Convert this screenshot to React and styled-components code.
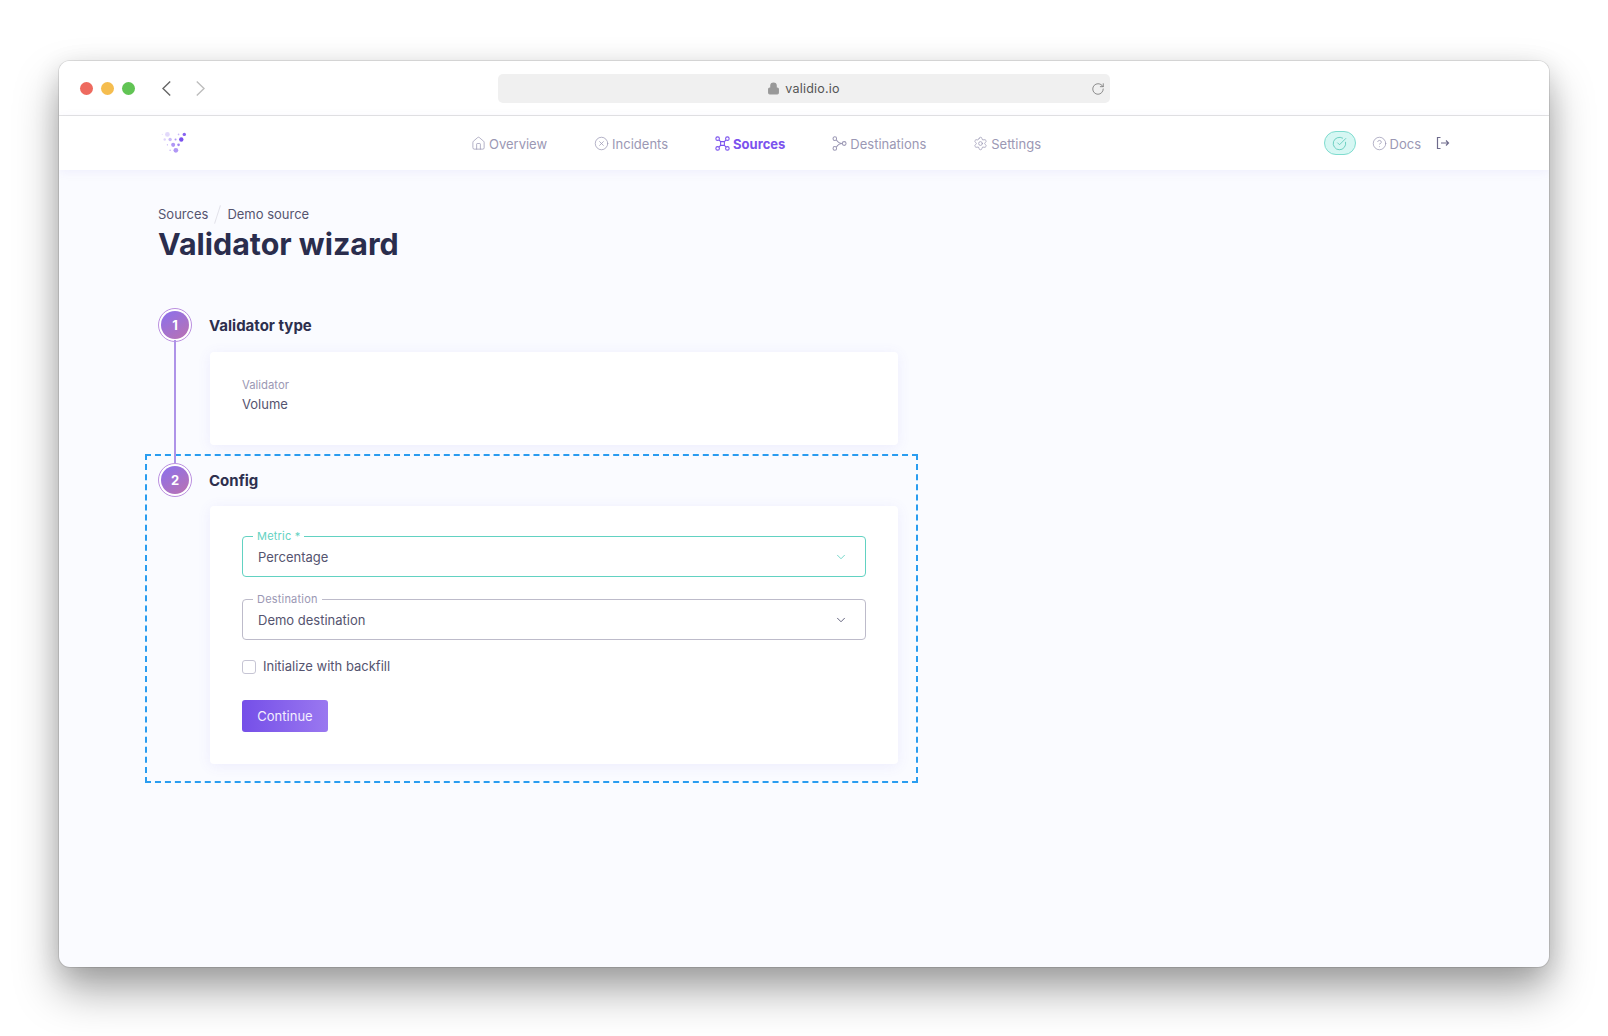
import React from "react";
import styled, { createGlobalStyle } from "styled-components";
import { House, CircleX, Settings, CircleHelp, CircleCheckBig, ChevronDown, Lock, RotateCw } from "lucide-react";

const GlobalStyle = createGlobalStyle`
  html, body { margin: 0; background: #fff; }
  * { box-sizing: border-box; }
  body { font-family: "Inter", "Liberation Sans", sans-serif; color: #4a4a68; }
`;

const Page = styled.div`
  width: 1608px;
  height: 1036px;
  padding: 61px 59px 69px;
  overflow: hidden;
`;
const Window = styled.div`
  height: 906px;
  border-radius: 11px;
  overflow: hidden;
  background: #fafbff;
  box-shadow: 0 0 0 1px rgba(0, 0, 0, 0.1), 0 24px 44px rgba(0, 0, 0, 0.34), 0 6px 26px rgba(0, 0, 0, 0.12);
`;
const TitleBar = styled.div`
  height: 55px;
  background: #fff;
  border-bottom: 1px solid #e3e3e3;
  display: flex;
  align-items: center;
  padding: 0 21px;
`;
const Light = styled.span`
  width: 13px;
  height: 13px;
  border-radius: 50%;
  margin-right: 8px;
  background: ${(p) => p.$color};
`;
const Arrows = styled.div`
  display: flex;
  align-items: center;
  gap: 25px;
  margin-left: 18.5px;
  width: 336.5px;
`;
const UrlBar = styled.div`
  position: relative;
  width: 612px;
  height: 29px;
  border-radius: 5px;
  background: #f0f0f0;
  display: flex;
  align-items: center;
  justify-content: center;
  gap: 5px;
  padding: 1px 1px 0 0;
  font-size: 12.5px;
  letter-spacing: 0.2px;
  color: #555;
`;
const Reload = styled.span`
  position: absolute;
  right: 5px;
  top: 8px;
  display: flex;
  color: #777;
`;
const NavBar = styled.nav`
  height: 54px;
  background: #fff;
  display: flex;
  align-items: center;
  padding: 1px 99px 0 101px;
  box-shadow: 0 2px 10px rgba(108, 90, 230, 0.08);
  position: relative;
`;
const Logo = styled.svg`
  width: 27px;
  height: 22px;
  margin: -4px 284px 0 0;
  flex: none;
`;
const Menu = styled.div`
  display: flex;
  align-items: center;
  gap: 47px;
`;
const MenuItem = styled.a`
  display: flex;
  align-items: center;
  gap: 3px;
  font-size: 13px;
  font-weight: ${(p) => (p.$active ? 700 : 400)};
  color: ${(p) => (p.$active ? "#7b52ee" : "#9b98b4")};
`;
const RightSide = styled.div`
  margin-left: auto;
  display: flex;
  align-items: center;
`;
const StatusPill = styled.span`
  width: 32px;
  height: 24px;
  border-radius: 12px;
  background: #d6f7f3;
  border: 1px solid #7fdccf;
  color: #56c6b6;
  display: flex;
  align-items: center;
  justify-content: center;
  margin-right: 16px;
  margin-top: -1px;
`;
const LogoutIcon = styled.svg`
  width: 14px;
  height: 14px;
  margin: -1px 0 0 15px;
  color: #6e6b8c;
`;
const Content = styled.main`
  padding: 36px 0 0 99px;
`;
const Crumbs = styled.div`
  display: flex;
  align-items: center;
  height: 17px;
  font-size: 13px;
  line-height: 17px;
  color: #55546f;
`;
const CrumbSep = styled.span`
  width: 1px;
  height: 19px;
  background: #e2e2ea;
  transform: rotate(18deg);
  margin: 0 9px;
`;
const Title = styled.h1`
  margin: 1px 0 0;
  font-size: 30.4px;
  line-height: 40px;
  font-weight: 700;
  color: #2a2d4d;
`;
const Steps = styled.div`
  width: 740px;
  margin-top: 44px;
`;
const Step = styled.section`
  display: grid;
  grid-template-columns: 34px 1fr;
  column-gap: 17px;
  row-gap: 10px;
  ${(p) =>
    p.$selected &&
    `
    margin: 9px -20px 0 -13px;
    padding: 7px 18px 17px 11px;
    border: 2px dashed #2a9df0;
    row-gap: 9px;
  `}
`;
const Badge = styled.div`
  position: relative;
  width: 34px;
  height: 34px;
  padding: 2px;
  border-radius: 50%;
  border: 1.5px solid #bb90e0;
  background: linear-gradient(145deg, #8a70ee, #bb72b0) content-box, #fff padding-box;
  display: flex;
  align-items: center;
  justify-content: center;
  color: #fff;
  font-size: 13px;
  font-weight: 700;
  ${(p) =>
    p.$line &&
    `
    &::after {
      content: "";
      position: absolute;
      left: 14.5px;
      top: 31px;
      width: 2px;
      height: 123px;
      background: #ae93e8;
    }
  `}
`;
const StepTitle = styled.h2`
  margin: 0;
  align-self: center;
  font-size: 15px;
  font-weight: 700;
  color: #2d2f4e;
`;
const Card = styled.div`
  grid-column: 2;
  margin-left: 1px;
  background: #fff;
  border-radius: 4px;
  box-shadow: 0 2px 14px rgba(104, 90, 230, 0.09);
  padding: ${(p) => p.$pad};
`;
const SmallLabel = styled.div`
  font-size: 11.3px;
  line-height: 16px;
  color: #9b98b4;
`;
const Value = styled.div`
  font-size: 13px;
  line-height: 20px;
  margin-top: 1px;
  color: #55546f;
`;
const Field = styled.fieldset`
  margin: 0 0 16px;
  padding: 0 17px 4px 15px;
  height: 47px;
  border: 1px solid ${(p) => p.$color};
  border-radius: 4px;
  display: flex;
  align-items: center;
  justify-content: space-between;
  color: ${(p) => p.$chevron};
`;
const Legend = styled.legend`
  margin-left: -5px;
  padding: 0 4px;
  font-size: 11px;
  line-height: 12px;
  letter-spacing: 0.2px;
  color: ${(p) => p.$color};
`;
const FieldText = styled.span`
  font-size: 13px;
  color: #55546f;
`;
const CheckRow = styled.label`
  display: flex;
  align-items: center;
  gap: 7px;
  font-size: 13px;
  line-height: 17px;
  color: #55546f;
  margin-top: 18px;
`;
const CheckBox = styled.span`
  width: 14px;
  height: 14px;
  border: 1px solid #c6c5d4;
  border-radius: 3px;
  background: #fff;
`;
const Button = styled.button`
  display: block;
  width: 86px;
  height: 32px;
  margin-top: 25px;
  border: 0;
  border-radius: 3px;
  font: inherit;
  font-size: 13px;
  color: #f3effe;
  background: linear-gradient(90deg, #754fe8, #9a78f0);
`;

const dots = [
  [52, 30, 7, 0.22], [37, 30, 2, 0.15], [85, 30, 2.5, 0.4], [102, 30, 5, 0.9],
  [44, 45, 3.5, 0.25], [60, 45, 5, 0.4], [76, 45, 3, 0.6], [93, 45, 6.5, 1],
  [52, 61, 2, 0.5], [69, 61, 6, 0.6], [85, 61, 4, 0.7], [60, 77, 2, 0.5], [77, 77, 7, 0.6],
];

const Arrow = ({ d, color }) => (
  <svg width="9" height="15" viewBox="0 0 9 15" fill="none" stroke={color} strokeWidth="1.4">
    <path d={d} />
  </svg>
);

const SourcesIcon = () => (
  <svg width="15" height="15" viewBox="0 0 16 16" fill="none" stroke="currentColor" strokeWidth="1.15">
    <circle cx="2.8" cy="2.8" r="1.9" />
    <circle cx="13.2" cy="2.8" r="1.9" />
    <circle cx="2.8" cy="13.2" r="1.9" />
    <circle cx="13.2" cy="13.2" r="1.9" />
    <path d="M4.2 4.2 L6 6 H10 L11.8 4.2 M10 6 V10 L11.8 11.8 M10 10 H6 L4.2 11.8 M6 10 V6" />
  </svg>
);

const DestinationsIcon = () => (
  <svg width="15" height="15" viewBox="0 0 16 16" fill="none" stroke="currentColor" strokeWidth="1.1">
    <circle cx="3" cy="2.8" r="1.9" />
    <circle cx="3" cy="13.2" r="1.9" />
    <circle cx="13" cy="8" r="2" />
    <path d="M4.6 4 Q7 8 11 8 M4.6 12 Q7 8 11 8" />
  </svg>
);

const App = () => {
  return (
    <Page>
      <GlobalStyle />
      <Window>
        <TitleBar>
          <Light $color="#ee6a5f" />
          <Light $color="#f5bd4f" />
          <Light $color="#61c454" />
          <Arrows>
            <Arrow d="M8.2 0.6 L1 7.5 L8.2 14.4" color="#666" />
            <Arrow d="M0.8 0.6 L8 7.5 L0.8 14.4" color="#bdbdbd" />
          </Arrows>
          <UrlBar>
            <Lock size={13} color="#999" fill="#999" />
            validio.io
            <Reload>
              <RotateCw size={14} strokeWidth={1.4} />
            </Reload>
          </UrlBar>
        </TitleBar>
        <NavBar>
          <Logo viewBox="30 20 80 65">
            {dots.map(([cx, cy, r, o], i) => (
              <circle key={i} cx={cx} cy={cy} r={r} fill="#7b52ee" opacity={o} />
            ))}
          </Logo>
          <Menu>
            <MenuItem>
              <House size={15} strokeWidth={1.2} />
              Overview
            </MenuItem>
            <MenuItem>
              <CircleX size={15} strokeWidth={1.2} />
              Incidents
            </MenuItem>
            <MenuItem $active>
              <SourcesIcon />
              Sources
            </MenuItem>
            <MenuItem>
              <DestinationsIcon />
              Destinations
            </MenuItem>
            <MenuItem>
              <Settings size={15} strokeWidth={1.2} />
              Settings
            </MenuItem>
          </Menu>
          <RightSide>
            <StatusPill>
              <CircleCheckBig size={15} strokeWidth={1.3} />
            </StatusPill>
            <MenuItem>
              <CircleHelp size={15} strokeWidth={1.2} />
              Docs
            </MenuItem>
            <LogoutIcon viewBox="0 0 14 14" fill="none" stroke="currentColor" strokeWidth="1.2">
              <path d="M4.5 1.5 H1.5 V12.5 H4.5 M5 7 H12.5 M10 4.5 L12.5 7 L10 9.5" />
            </LogoutIcon>
          </RightSide>
        </NavBar>
        <Content>
          <Crumbs>
            Sources
            <CrumbSep />
            Demo source
          </Crumbs>
          <Title>Validator wizard</Title>
          <Steps>
            <Step>
              <Badge $line>1</Badge>
              <StepTitle>Validator type</StepTitle>
              <Card $pad="25px 32px 31px">
                <SmallLabel>Validator</SmallLabel>
                <Value>Volume</Value>
              </Card>
            </Step>
            <Step $selected>
              <Badge>2</Badge>
              <StepTitle>Config</StepTitle>
              <Card $pad="24px 32px 32px">
                <Field $color="#62d2c2" $chevron="#62d2c2">
                  <Legend $color="#62d2c2">Metric *</Legend>
                  <FieldText>Percentage</FieldText>
                  <ChevronDown size={14} strokeWidth={1.5} />
                </Field>
                <Field $color="#bdbbca" $chevron="#4f4f6d">
                  <Legend $color="#9b98b4">Destination</Legend>
                  <FieldText>Demo destination</FieldText>
                  <ChevronDown size={14} strokeWidth={1.5} />
                </Field>
                <CheckRow>
                  <CheckBox />
                  Initialize with backfill
                </CheckRow>
                <Button>Continue</Button>
              </Card>
            </Step>
          </Steps>
        </Content>
      </Window>
    </Page>
  );
};

export default App;
